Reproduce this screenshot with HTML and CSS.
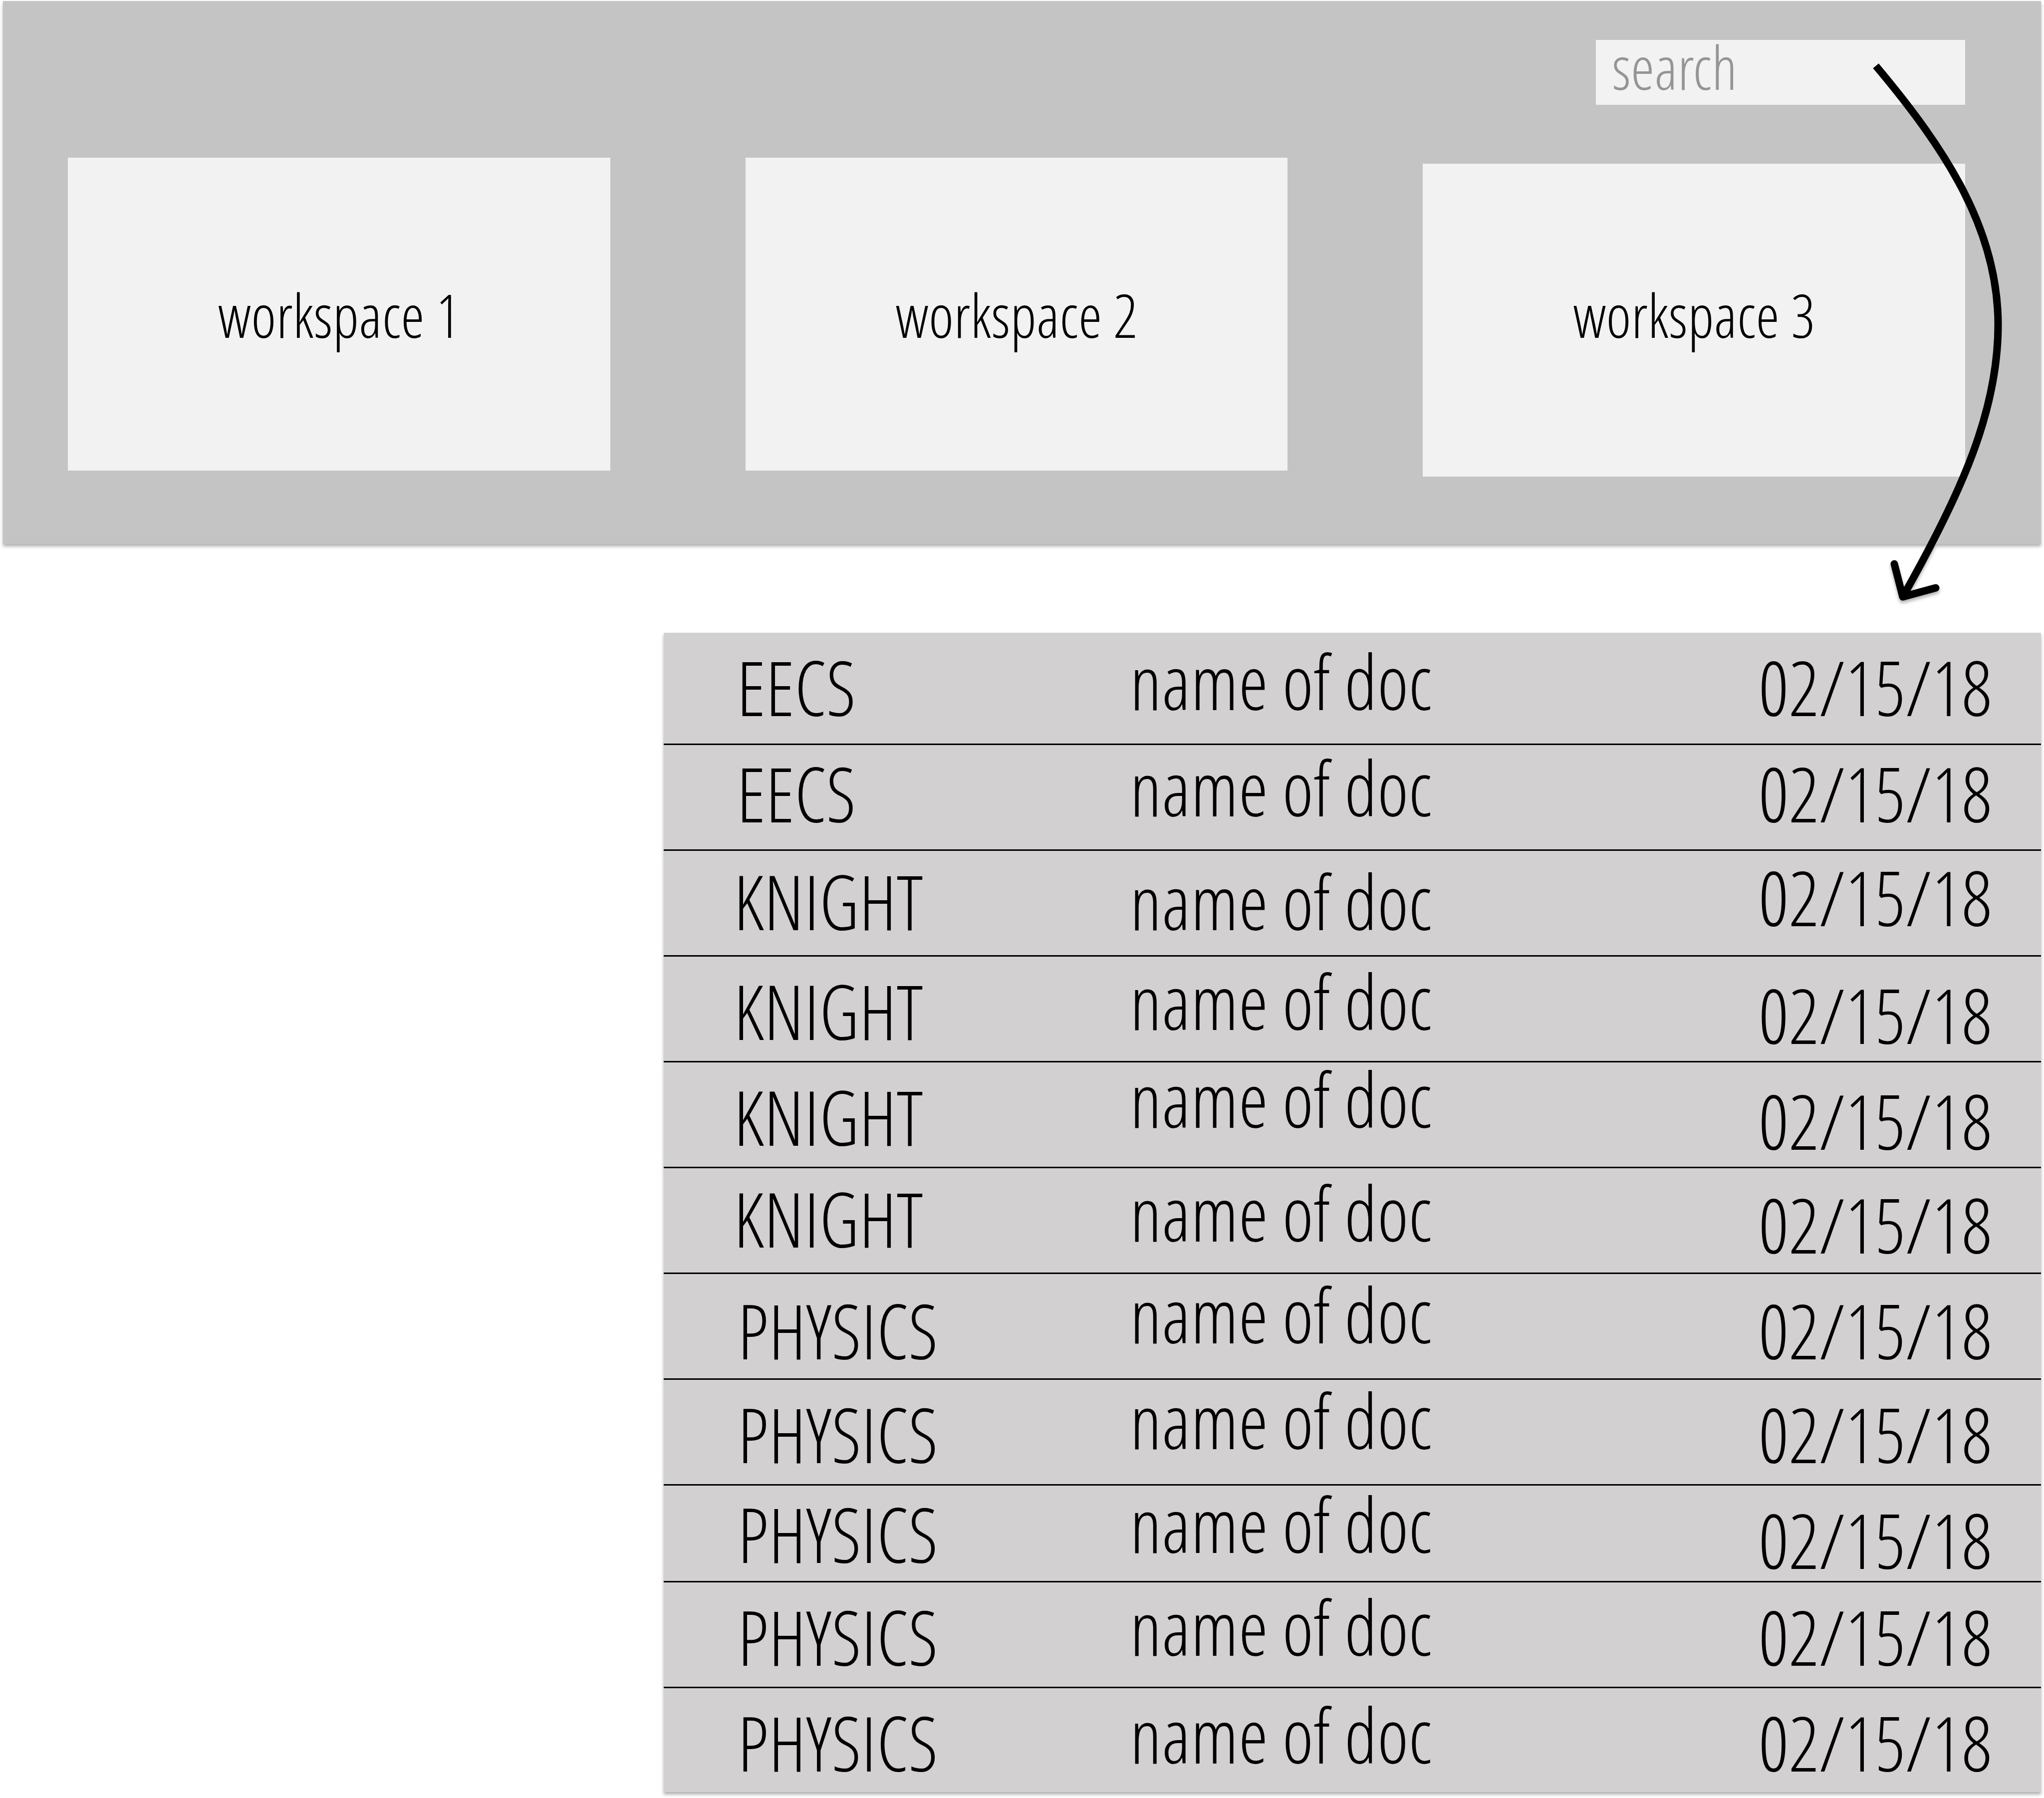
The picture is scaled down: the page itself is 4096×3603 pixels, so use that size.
FILE: index.html
```html
<!DOCTYPE html>
<html lang="en">
<head>
<meta charset="utf-8">
<title>Workspaces</title>
<link rel="stylesheet" href="styles.css">
</head>
<body>
<header class="board">
  <form class="search" role="search">
    <input class="search-box" type="search" aria-label="search" placeholder="search">
  </form>
  <nav class="workspaces">
    <a class="card" href="#workspace-1">workspace 1</a>
    <a class="card" href="#workspace-2">workspace 2</a>
    <a class="card card-low" href="#workspace-3">workspace 3</a>
  </nav>
  <svg class="arrow" viewBox="3740 110 280 1110" aria-hidden="true">
    <path d="M3757 132C3900 302 4002 462 4002 651C4002 821 3931 984 3811 1196"/>
    <path class="head" d="M3794 1130L3811 1196L3877 1178"/>
  </svg>
</header>
<main class="results">
  <table class="docs">
    <colgroup><col class="col-space"><col class="col-name"><col></colgroup>
    <tbody class="eecs">
      <tr class="first"><td class="s9">EECS</td><td class="s6">name of doc</td><td class="s9">02/15/18</td></tr>
      <tr><td class="s6">EECS</td><td class="s3">name of doc</td><td class="s6">02/15/18</td></tr>
    </tbody>
    <tbody class="knight">
      <tr><td class="s7">KNIGHT</td><td class="s7">name of doc</td><td class="s5">02/15/18</td></tr>
      <tr><td class="s9">KNIGHT</td><td class="s4">name of doc</td><td class="s11">02/15/18</td></tr>
      <tr><td class="s9">KNIGHT</td><td class="s0">name of doc</td><td class="s11">02/15/18</td></tr>
      <tr><td class="s7">KNIGHT</td><td class="s4">name of doc</td><td class="s10">02/15/18</td></tr>
    </tbody>
    <tbody class="physics">
      <tr><td class="s10">PHYSICS</td><td class="s2">name of doc</td><td class="s10">02/15/18</td></tr>
      <tr><td class="s9">PHYSICS</td><td class="s2">name of doc</td><td class="s9">02/15/18</td></tr>
      <tr class="short"><td class="s6">PHYSICS</td><td class="s1">name of doc</td><td class="s9">02/15/18</td></tr>
      <tr><td class="s9">PHYSICS</td><td class="s4">name of doc</td><td class="s9">02/15/18</td></tr>
      <tr class="last"><td class="s9">PHYSICS</td><td class="s5">name of doc</td><td class="s9">02/15/18</td></tr>
    </tbody>
  </table>
</main>
</body>
</html>
```
FILE: styles.css
```css
* { box-sizing: border-box; }

body {
  margin: 0;
  padding: 2px 6px 12px;
  background: #fff;
  color: #000;
  font-family: "Open Sans Condensed Light", "Open Sans Condensed", "Open Sans", sans-serif;
  font-weight: 300;
}

/* Header board with the search box and the workspace cards */
.board {
  position: relative;
  padding: 78px 152px 135px 130px;
  background: #c4c4c4;
  filter: drop-shadow(0 5px 3px rgba(0, 0, 0, .3));
}

.search {
  display: flex;
  justify-content: flex-end;
  margin: 0 0 106px;
}

.search-box {
  appearance: none;
  width: 740px;
  height: 130px;
  margin: 0;
  padding: 0 32px 24px;
  border: 0;
  border-radius: 0;
  background: #f2f2f2;
  color: #000;
  font: inherit;
  font-size: 121px;
  line-height: 106px;
}

.search-box::placeholder { color: #959595; opacity: 1; }

.workspaces {
  display: grid;
  grid-template-columns: repeat(3, 1fr);
  align-items: start;
  gap: 271px;
}

.card {
  height: 627px;
  padding-top: 254px;
  background: #f2f2f2;
  color: #000;
  font-size: 121px;
  line-height: 120px;
  text-align: center;
  text-decoration: none;
}

.card-low {
  margin-top: 12px;
  padding-top: 242px;
}

/* Arrow from the search box to the result list */
.arrow {
  position: absolute;
  top: 108px;
  right: 68px;
  width: 280px;
  height: 1110px;
  fill: none;
  stroke: #000;
  stroke-width: 15px;
}

.arrow .head {
  stroke-linecap: round;
  stroke-linejoin: round;
}

/* Result list */
.results {
  margin: 178px 0 0 1324px;
}

.docs {
  width: 100%;
  table-layout: fixed;
  border-collapse: separate;
  border-spacing: 0;
  background: #d2d0d1;
  box-shadow: 0 5px 6px rgba(0, 0, 0, .3);
  font-size: 151px;
  line-height: 122px;
}

.col-space { width: 934px; }
.col-name { width: 1260px; }

td {
  height: 212px;
  padding: 0;
  border-bottom: 3px solid #000;
  vertical-align: top;
  white-space: nowrap;
}

.first td { height: 225px; }
.short td { height: 194px; }
.last td { height: 208px; border-bottom: 0; }

.eecs td:first-child { padding-left: 146px; }
.knight td:first-child { padding-left: 140px; }
.physics td:first-child { padding-left: 148px; }

/* Drop of a cell's text below the top of its row, in steps of 4px */
.s0 { padding-top: 12px; }
.s1 { padding-top: 16px; }
.s2 { padding-top: 20px; }
.s3 { padding-top: 24px; }
.s4 { padding-top: 28px; }
.s5 { padding-top: 32px; }
.s6 { padding-top: 36px; }
.s7 { padding-top: 40px; }
.s9 { padding-top: 48px; }
.s10 { padding-top: 52px; }
.s11 { padding-top: 56px; }
```
